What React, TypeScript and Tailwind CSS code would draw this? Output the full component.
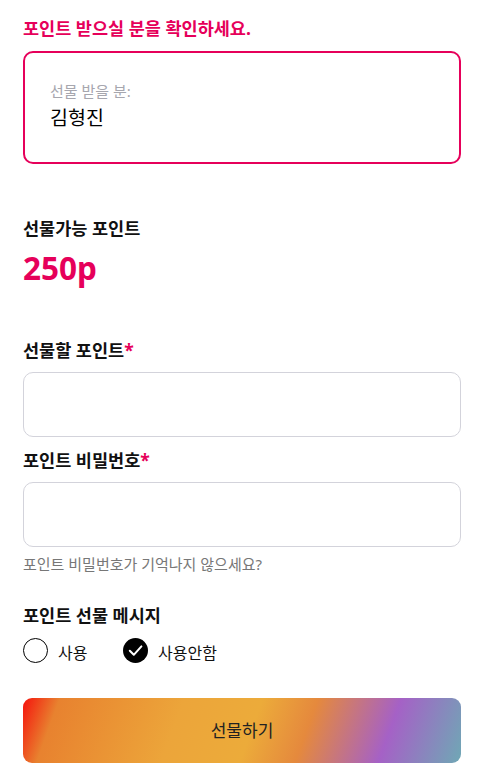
export default function App() {
  return (
    <div className="w-[481px] min-h-[776px] bg-white pl-[23px] pr-[20px] pt-4 font-['Noto_Sans','Noto_Sans_CJK_KR',sans-serif] text-[#111]">
      <h2 className="text-[17.5px] font-bold leading-6 text-[#e6005a]">포인트 받으실 분을 확인하세요.</h2>

      <div className="mt-[11px] h-[113px] rounded-[10px] border-2 border-[#e6005a] px-[25px] pt-[28px]">
        <p className="text-[15px] leading-5 text-[#a6a6ae]">선물 받을 분:</p>
        <p className="mt-[3px] text-[19.5px] leading-7 text-black">김형진</p>
      </div>

      <p className="mt-[52px] text-[17.5px] font-bold leading-6">선물가능 포인트</p>
      <p className="mt-[10px] text-[31.5px] font-bold leading-9 text-[#e6005a]">250p</p>

      <label className="mt-[52px] block text-[17.5px] font-bold leading-6">
        선물할 포인트<span className="text-[#e6005a]">*</span>
      </label>
      <input
        type="text"
        className="mt-[10px] block h-[65px] w-full rounded-[10px] border border-[#d3d3db] px-4 outline-none"
      />

      <label className="mt-[11px] block text-[17.5px] font-bold leading-6">
        포인트 비밀번호<span className="text-[#e6005a]">*</span>
      </label>
      <input
        type="password"
        className="mt-[10px] block h-[65px] w-full rounded-[10px] border border-[#d3d3db] px-4 outline-none"
      />
      <p className="mt-[7px] text-[15px] leading-5 text-[#777]">포인트 비밀번호가 기억나지 않으세요?</p>

      <p className="mt-[29px] text-[17.5px] font-bold leading-6">포인트 선물 메시지</p>
      <div className="mt-[11px] flex h-[25px] items-center">
        <label className="flex w-[100px] items-center">
          <span className="block h-[25px] w-[25px] shrink-0 rounded-full border border-black" />
          <span className="ml-[10px] translate-y-[2px] text-[16px] leading-6">사용</span>
        </label>
        <label className="flex items-center">
          <svg width="25" height="25" viewBox="0 0 25 25" className="shrink-0">
            <circle cx="12.5" cy="12.5" r="12.5" fill="#000" />
            <path d="M6.8 12.8l4 4 7.6-8.4" fill="none" stroke="#fff" strokeWidth="2" strokeLinecap="round" strokeLinejoin="round" />
          </svg>
          <span className="ml-[10px] translate-y-[2px] text-[16px] leading-6">사용안함</span>
        </label>
      </div>

      <button className="mt-[35px] flex h-[65px] w-full items-center justify-center rounded-[9px] bg-[linear-gradient(110deg,#f5130d_0%,#e8822f_8%,#eca53a_35%,#ecab3a_52%,#e5893d_64%,#a561c6_82%,#6fa8b5_100%)] text-[17px] text-[#222]">
        선물하기
      </button>
    </div>
  );
}
